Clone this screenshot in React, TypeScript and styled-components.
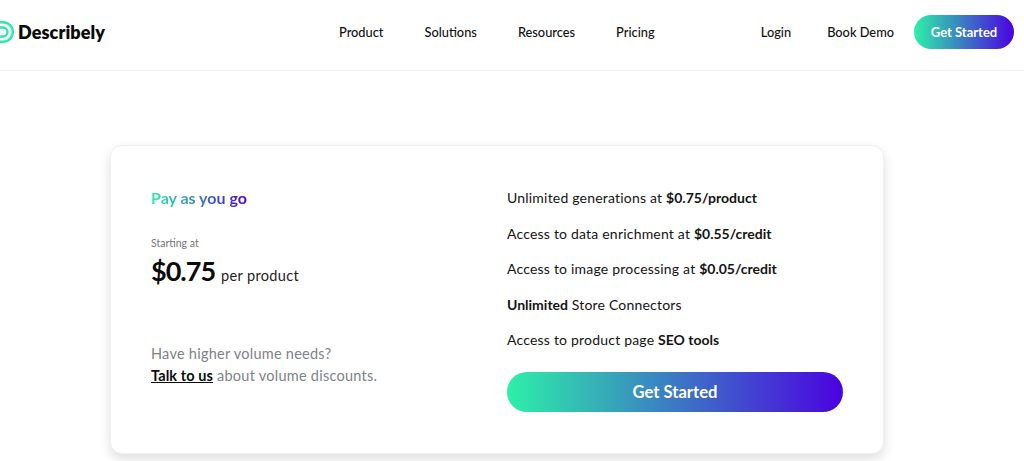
import styled, { createGlobalStyle } from 'styled-components'

const GRADIENT = 'linear-gradient(90deg, #2df0a8 0%, #4a02e0 100%)'

const GlobalStyle = createGlobalStyle`
  html, body {
    margin: 0;
    height: 100%;
    overflow: hidden;
    background: #fff;
  }
  body {
    font-family: Lato, "Open Sans", sans-serif;
    color: #0b0b0b;
  }
`

const features = [
  <>Unlimited generations at <b>$0.75/product</b></>,
  <>Access to data enrichment at <b>$0.55/credit</b></>,
  <>Access to image processing at <b>$0.05/credit</b></>,
  <><b>Unlimited</b> Store Connectors</>,
  <>Access to product page <b>SEO tools</b></>,
]

const Logo = () => (
  <LogoMark width="28" height="28" viewBox="0 0 28 28" fill="none" stroke="#2fe9a9" strokeWidth="2.4">
    <path d="M0 4.2h17a9.8 9.8 0 0 1 0 19.6H0" />
    <path d="M0 9.5h17a4.5 4.5 0 0 1 0 9H0" />
  </LogoMark>
)

export default function App() {
  return (
    <>
      <GlobalStyle />
      <Header>
        <Brand>
          <Logo />
          <BrandName>Describely</BrandName>
        </Brand>
        <MainNav>
          <NavLink>Product</NavLink>
          <NavLink>Solutions</NavLink>
          <NavLink>Resources</NavLink>
          <NavLink>Pricing</NavLink>
        </MainNav>
        <SideNav>
          <NavLink>Login</NavLink>
          <NavLink>Book Demo</NavLink>
          <HeaderButton>Get Started</HeaderButton>
        </SideNav>
      </Header>
      <Main>
        <Card>
          <LeftColumn>
            <div>
              <PlanName>Pay as you go</PlanName>
              <StartingAt>Starting at</StartingAt>
              <PriceRow>
                <Price>$0.75</Price>
                <PriceUnit>per product</PriceUnit>
              </PriceRow>
            </div>
            <VolumeNote>
              Have higher volume needs?
              <br />
              <TalkLink>Talk to us</TalkLink> about volume discounts.
            </VolumeNote>
          </LeftColumn>
          <RightColumn>
            <FeatureList>
              {features.map((f, i) => (
                <Feature key={i}>{f}</Feature>
              ))}
            </FeatureList>
            <CardButton>Get Started</CardButton>
          </RightColumn>
        </Card>
      </Main>
    </>
  )
}

const Header = styled.header`
  display: flex;
  align-items: center;
  height: 64px;
  padding: 0 10px 6px 0;
  border-bottom: 1px solid #f0f0f0;
`

const Brand = styled.div`
  display: flex;
  align-items: center;
  gap: 4px;
  flex: none;
  width: 353px;
  margin-left: -14px;
`

const LogoMark = styled.svg`
  flex: none;
`

const BrandName = styled.span`
  font-size: 18px;
  font-weight: 800;
  letter-spacing: 0.1px;
`

const MainNav = styled.nav`
  display: flex;
  gap: 41px;
`

const SideNav = styled.div`
  display: flex;
  align-items: center;
  gap: 36px;
  margin-left: auto;
`

const NavLink = styled.a`
  font-size: 12.8px;
  font-weight: 500;
  color: #111;
`

const HeaderButton = styled.button`
  width: 100px;
  height: 34px;
  margin-left: -16px;
  border: 0;
  border-radius: 17px;
  background: ${GRADIENT};
  color: #fff;
  font: 700 13px Lato, sans-serif;
`

const Main = styled.main`
  padding: 74px 140px 0 110px;
`

const Card = styled.section`
  display: flex;
  width: 774px;
  height: 309px;
  box-sizing: border-box;
  padding: 42px 40px 41px;
  border-radius: 12px;
  border: 1px solid #f0f0f0;
  background: #fff;
  box-shadow: 0 5px 12px rgba(0, 0, 0, 0.13);
`

const LeftColumn = styled.div`
  display: flex;
  flex-direction: column;
  justify-content: space-between;
  width: 356px;
  flex: none;
`

const PlanName = styled.div`
  display: inline-block;
  font-size: 16px;
  font-weight: 700;
  line-height: 20px;
  background: ${GRADIENT};
  -webkit-background-clip: text;
  background-clip: text;
  color: transparent;
`

const StartingAt = styled.div`
  margin-top: 28px;
  font-size: 10.5px;
  line-height: 14px;
  color: #757575;
`

const PriceRow = styled.div`
  display: flex;
  align-items: baseline;
  gap: 6px;
  margin-top: 4px;
`

const Price = styled.span`
  font-size: 27px;
  font-weight: 700;
  line-height: 34px;
  letter-spacing: -1px;
`

const PriceUnit = styled.span`
  font-size: 14.5px;
  letter-spacing: 0.35px;
  color: #222;
`

const VolumeNote = styled.p`
  margin: 0 0 25px;
  font-size: 14.5px;
  line-height: 22px;
  letter-spacing: 0.25px;
  color: #7d8288;
`

const TalkLink = styled.a`
  font-weight: 700;
  letter-spacing: 0.1px;
  color: #0b0b0b;
  text-decoration: underline;
`

const RightColumn = styled.div`
  display: flex;
  flex-direction: column;
  flex: 1;
  padding-top: 1px;
`

const FeatureList = styled.ul`
  display: flex;
  flex-direction: column;
  gap: 17.6px;
  margin: 0;
  padding: 0;
  list-style: none;
`

const Feature = styled.li`
  font-size: 14px;
  line-height: 18px;
  letter-spacing: 0.2px;
  color: #141414;

  b {
    letter-spacing: 0;
  }
`

const CardButton = styled.button`
  width: 336px;
  height: 40px;
  margin-top: 22.5px;
  border: 0;
  border-radius: 20px;
  background: ${GRADIENT};
  color: #fff;
  font: 700 16.6px Lato, sans-serif;
`
